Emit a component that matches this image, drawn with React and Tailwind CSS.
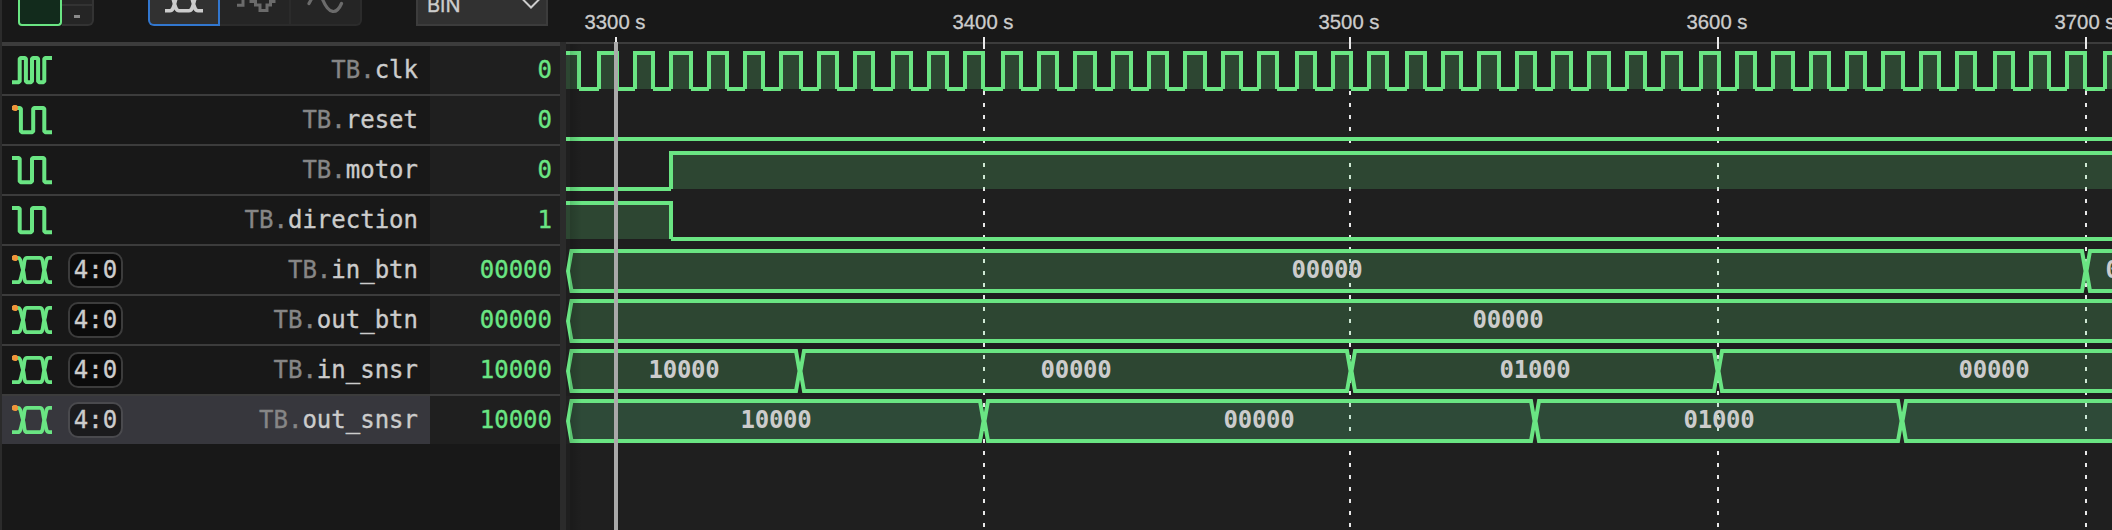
const GREEN = "#6ae583";
const MONO = "'DejaVu Sans Mono', 'Liberation Mono', monospace";

const signals = [
  { name: "clk", value: "0", kind: "clock" },
  { name: "reset", value: "0", kind: "bit", port: true, wave: [[566, 2114, 0]] },
  { name: "motor", value: "0", kind: "bit", wave: [[560, 671, 0], [671, 2120, 1]] },
  { name: "direction", value: "1", kind: "bit", wave: [[560, 671, 1], [671, 2120, 0]] },
  { name: "in_btn", value: "00000", kind: "bus", port: true, wave: [[567.5, 2086, "00000", 1327], [2086, 2500, "00000", 2141]] },
  { name: "out_btn", value: "00000", kind: "bus", port: true, wave: [[567.5, 2500, "00000", 1508]] },
  { name: "in_snsr", value: "10000", kind: "bus", port: true, wave: [[567.5, 800, "10000", 684], [800, 1351, "00000", 1076], [1351, 1718, "01000", 1535], [1718, 2300, "00000", 1994]] },
  { name: "out_snsr", value: "10000", kind: "bus", port: true, selected: true, wave: [[567.5, 984, "10000", 776], [984, 1535, "00000", 1259], [1535, 1902, "01000", 1719], [1902, 2500, "", 2200]] },
];

const ticks = [
  [616, "3300 s"],
  [984, "3400 s"],
  [1350, "3500 s"],
  [1718, "3600 s"],
  [2086, "3700 s"],
];

const clockEdge = (k) => 617 + 2 * Math.floor(9.183 * k + 0.3);
const clockWave = [[540, clockEdge(-2), 1]];
for (let k = -2; k < 83; k++) {
  clockWave.push([clockEdge(k), clockEdge(k + 1), k % 2 === 0 ? 0 : 1]);
}

function SignalIcon({ kind, port }) {
  const first = port ? 1.2 : 0;
  return (
    <svg width="40" height="30" viewBox="0 0 40 30" fill="none" stroke={GREEN} strokeWidth="4" strokeLinejoin="round" className="shrink-0">
      {kind === "clock" && (
        <path d="M0 27.2H6.7L7.7 26.2V3.9L8.7 2.9H12.9L13.9 3.9V26.2L14.9 27.2H19L20 26.2V3.9L21 2.9H25.1L26.1 3.9V26.2L27.1 27.2H31.3L32.3 26.2V3.9L33.3 2.9H40" />
      )}
      {kind === "bit" && (
        <path d={`M0 2.9H${6.7 + first}L${7.7 + first} 3.9V26.2L${8.7 + first} 27.2H${19 + first}L${20 + first} 26.2V3.9L${21 + first} 2.9H31.3L32.3 3.9V26.2L33.3 27.2H40`} />
      )}
      {kind === "bus" && (
        <g strokeWidth="3.8">
          <path d="M0 2.9H6C9 2.9 9.3 10 11 15C12.7 20 11.5 27.2 15 27.2H28C31.5 27.2 30.6 20 32.3 15C34 10 33.5 2.9 37 2.9H40" />
          <path d="M0 27.2H6C9 27.2 9.3 20 11 15C12.7 10 11.5 2.9 15 2.9H28C31.5 2.9 30.6 10 32.3 15C34 20 33.5 27.2 37 27.2H40" />
        </g>
      )}
      {port && <circle cx="3" cy="2.9" r="3.1" fill="#f0943a" stroke="none" />}
    </svg>
  );
}

function Toolbar() {
  return (
    <div className="flex h-[42px] items-start pl-4">
      <div className="h-[26px] w-11 rounded-b-[4px] border-2 border-t-0 border-[#6ae583] bg-[#122b1c]" />
      <div className="flex h-[26px] w-8 flex-col rounded-br-[6px] border-r-2 border-b-2 border-[#333333] bg-[#252525]">
        <div className="h-1.5 border-b-2 border-[#333333]" />
        <div className="mx-auto mt-[9px] h-[3px] w-1.5 bg-[#8a8a8a]" />
      </div>
      <div className="ml-[54px] flex h-[26px]">
        <div className="flex w-[72px] justify-center rounded-bl-[6px] border-2 border-t-0 border-[#3277cf] bg-[#313131]">
          <svg width="38" height="14" viewBox="0 0 38 14" fill="none" stroke="#cccccc" strokeWidth="3.6">
            <path d="M0 10.7H5C9 10.7 9 4 11.5 -3M7.5 -3C10 4 10 10.7 14 10.7H24C28 10.7 28 4 30.5 -3M26.5 -3C29 4 29 10.7 33 10.7H38" />
          </svg>
        </div>
        <div className="w-[71px] border-r-2 border-b-2 border-[#2b2b2b] bg-[#252525]">
          <svg width="69" height="24" viewBox="0 0 69 24" fill="none" stroke="#6b6b6b" strokeWidth="3">
            <path d="M17 5.2H23V-2M31 -2V1.5H35.5V5H40V10.5H47V5H50.5V1.5H54V-2" />
          </svg>
        </div>
        <div className="w-[71px] rounded-br-[6px] border-r-2 border-b-2 border-[#2b2b2b] bg-[#252525]">
          <svg width="69" height="24" viewBox="0 0 69 24" fill="none" stroke="#6b6b6b" strokeWidth="3.2" strokeLinecap="round">
            <path d="M18 3.5L21 -2M31 -2C38 16 46 14 50.5 3.5" />
          </svg>
        </div>
      </div>
      <div className="ml-[54px] flex h-[26px] w-[132px] items-start justify-between overflow-hidden border-2 border-t-0 border-[#3c3c3c] bg-[#313131] pr-1.5 pl-[9px]">
        <span className="-mt-[9px] font-['Inter',sans-serif] text-[20px] leading-7 text-[#cccccc]">BIN</span>
        <svg width="18" height="12" viewBox="0 0 18 12" fill="none" stroke="#cccccc" strokeWidth="2">
          <path d="M0.5 -1L9 7.5L17.5 -1" />
        </svg>
      </div>
    </div>
  );
}

function SignalRow({ signal, last }) {
  const { name, value, kind, port, selected } = signal;
  return (
    <div className={`flex ${last ? "h-12" : selected ? "h-[50px]" : "h-[50px] border-b-2 border-[#3c3c3c]"}`}>
      <div className={`flex w-[428px] items-center pr-3 pl-2.5 ${selected ? "bg-[#37373d]" : "bg-[#181818]"}`}>
        <SignalIcon kind={kind} port={port} />
        {kind === "bus" && (
          <span className={`ml-4 flex h-9 w-[55px] items-center justify-center rounded-[10px] border-2 ${selected ? "border-[#4a4a4e] bg-[#1b1b1d]" : "border-[#3c3c3c] bg-[#0b0b0b]"} text-[#cccccc]`}>
            4:0
          </span>
        )}
        <span className="ml-auto text-[#cccccc]">
          <span className="text-[#868686]">TB.</span>
          {name}
        </span>
      </div>
      <div className="flex w-[130px] items-center justify-end bg-[#1f1f1f] pr-2 text-[#6ae583]">{value}</div>
    </div>
  );
}

function BitWave({ wave, top }) {
  const hi = top + 7;
  const lo = top + 43;
  return wave.map(([a, b, level], i) =>
    level ? (
      <g key={i}>
        <rect x={a} y={hi} width={b - a} height={lo - hi} fill={GREEN} fillOpacity="0.2" />
        <path d={`M${a} ${lo}V${hi}H${b}V${lo}`} fill="none" stroke={GREEN} strokeWidth="4" />
      </g>
    ) : (
      <path key={i} d={`M${a} ${lo}H${b}`} stroke={GREEN} strokeWidth="4" />
    )
  );
}

function BusWave({ wave, top, selected }) {
  const hi = top + 5;
  const mid = top + 25;
  const lo = top + 45;
  return wave.map(([a, b, label, cx], i) => (
    <g key={i}>
      <path
        d={`M${a + 0.5} ${mid}L${a + 4} ${hi}H${b - 4}L${b - 0.5} ${mid}L${b - 4} ${lo}H${a + 4}Z`}
        fill={selected ? "#60e58c" : GREEN}
        fillOpacity={selected ? 0.21 : 0.2}
        stroke={GREEN}
        strokeWidth="4"
      />
      <text x={cx} y={top + 32} textAnchor="middle" fill="#cccccc" fontSize="24" fontWeight="700" letterSpacing="-0.25" fontFamily={MONO}>
        {label}
      </text>
    </g>
  ));
}

function Waveforms() {
  return (
    <svg width="1546" height="530" viewBox="566 0 1546 530" className="block shrink-0">
      <defs>
        <linearGradient id="edge" x1="0" x2="1" y1="0" y2="0">
          <stop offset="0" stopColor="#000" stopOpacity="0.3" />
          <stop offset="1" stopColor="#000" stopOpacity="0" />
        </linearGradient>
      </defs>
      <rect x="566" y="0" width="1546" height="42" fill="#181818" />
      <rect x="566" y="42" width="1546" height="488" fill="#1f1f1f" />
      <rect x="566" y="42" width="1546" height="2" fill="#3c3c3c" />
      <rect x="566" y="396" width="1546" height="48" fill="#222222" />
      {ticks.map(([x, label]) => (
        <g key={x}>
          <text x={x - 1} y="29" textAnchor="middle" fill="#cccccc" stroke="#cccccc" strokeWidth="0.3" fontSize="20.3" fontFamily="'Liberation Sans', Arial, sans-serif">
            {label}
          </text>
          <path d={`M${x} 37V49`} stroke="#e8e8e8" strokeWidth="2" />
          <path d={`M${x} 55V530`} stroke="#e8e8e8" strokeWidth="2" strokeDasharray="4 8" />
        </g>
      ))}
      {signals.map((s, i) => {
        const top = 46 + i * 50;
        if (s.kind === "clock") return <BitWave key={s.name} wave={clockWave} top={top} />;
        if (s.kind === "bit") return <BitWave key={s.name} wave={s.wave} top={top} />;
        return <BusWave key={s.name} wave={s.wave} top={top} selected={s.selected} />;
      })}
      <rect x="570" y="44" width="12" height="486" fill="url(#edge)" fillOpacity="0.5" />
      <rect x="614" y="42" width="4" height="488" fill="#a9a9a9" />
    </svg>
  );
}

export default function App() {
  return (
    <div className="flex h-[530px] w-[2112px] overflow-hidden bg-[#181818]">
      <div className="w-[560px] shrink-0 border-l-2 border-[#2b2b2b] font-['DejaVu_Sans_Mono','Liberation_Mono',monospace] text-[24px] leading-8 [-webkit-text-stroke:0.35px_currentColor]">
        <Toolbar />
        <div className="h-1 bg-[#3c3c3c]" />
        {signals.map((s, i) => (
          <SignalRow key={s.name} signal={s} last={i === signals.length - 1} />
        ))}
      </div>
      <div className="flex w-1.5 shrink-0 flex-col">
        <div className="h-[42px] bg-[#181818]" />
        <div className="grow bg-[#2b2b2b]" />
      </div>
      <Waveforms />
    </div>
  );
}
